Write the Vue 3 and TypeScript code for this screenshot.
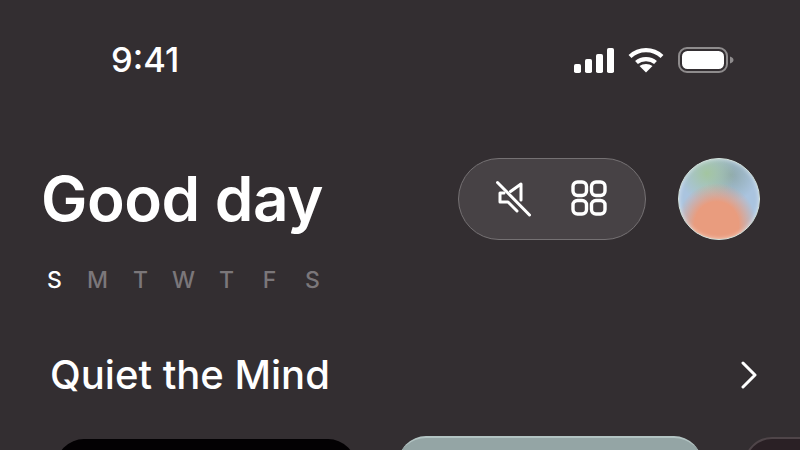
<script setup lang="ts">
const days: string[] = ['S', 'M', 'T', 'W', 'T', 'F', 'S']
</script>

<template>
  <div class="screen">
    <header class="status">
      <span class="time">9:41</span>
      <div class="status-icons">
        <svg width="40" height="25" viewBox="0 0 40 25" fill="#fff">
          <rect x="0" y="16" width="7" height="9" rx="1.8" />
          <rect x="11" y="11" width="7" height="14" rx="1.8" />
          <rect x="22" y="6" width="7" height="19" rx="1.8" />
          <rect x="33" y="0" width="7" height="25" rx="1.8" />
        </svg>
        <svg width="36" height="26" viewBox="0 0 36 26" fill="none" stroke="#fff" stroke-width="4.2">
          <path d="M2 9.5C11 1 25 1 34 9.5" />
          <path d="M8.5 15.5C13.5 11 22.5 11 27.5 15.5" />
          <path d="M11.5 19 L18 25.5 L24.5 19 C21 16.3 15 16.3 11.5 19Z" fill="#fff" stroke="none" />
        </svg>
        <svg class="battery" width="56" height="26" viewBox="0 0 56 26" fill="none">
          <rect x="1" y="1" width="48" height="24" rx="8" stroke="#8f8c8d" stroke-width="2" />
          <rect x="4" y="4" width="42" height="18" rx="5.5" fill="#fff" />
          <path d="M52 9.5 C54.5 10.5 55.5 11.5 55.5 13 C55.5 14.5 54.5 15.5 52 16.5Z" fill="#8f8c8d" />
        </svg>
      </div>
    </header>

    <section class="hero">
      <div class="greeting">
        <h1>Good day</h1>
        <ul class="days">
          <li v-for="(d, i) in days" :key="i" :class="{ active: i === 0 }">{{ d }}</li>
        </ul>
      </div>
      <div class="actions">
        <div class="pill">
          <svg width="36" height="38" viewBox="0 0 36 38" fill="none" stroke="#fff" stroke-width="3" stroke-linejoin="round" stroke-linecap="round">
            <path d="M26 20V4L15.5 11.5M9 13H5V22H13L22 31" />
            <path d="M2.5 2.5L34.5 35" />
          </svg>
          <svg class="grid-icon" width="36" height="36" viewBox="0 0 36 36" fill="none" stroke="#fff" stroke-width="3.4">
            <rect x="2" y="2" width="13.5" height="13.5" rx="4.5" />
            <rect x="20.5" y="2" width="13.5" height="13.5" rx="4.5" />
            <rect x="2" y="20.5" width="13.5" height="13.5" rx="4.5" />
            <rect x="20.5" y="20.5" width="13.5" height="13.5" rx="4.5" />
          </svg>
        </div>
        <div class="avatar"></div>
      </div>
    </section>

    <section class="title-row">
      <h2>Quiet the Mind</h2>
      <svg width="18" height="28" viewBox="0 0 18 28" fill="none" stroke="#fff" stroke-width="3" stroke-linecap="round" stroke-linejoin="round">
        <path d="M3 2L15 14L3 26" />
      </svg>
    </section>

    <section class="cards">
      <div class="card black"></div>
      <div class="card sage"></div>
      <div class="card plum"></div>
    </section>
  </div>
</template>

<style>
html, body { margin: 0; background: #332e31; }
</style>

<style scoped>
.screen {
  width: 800px;
  height: 450px;
  overflow: hidden;
  background: #332e31;
  color: #fff;
  font-family: Inter, "Liberation Sans", sans-serif;
  display: flex;
  flex-direction: column;
}
.status {
  display: flex;
  justify-content: space-between;
  align-items: center;
  padding: 40px 66px 0 111px;
  height: 40px;
}
.time {
  font-size: 34.5px;
  font-weight: 500;
  line-height: 40px;
}
.status-icons {
  display: flex;
  align-items: center;
  gap: 14px;
}
.status-icons svg { display: block; }
.hero {
  display: flex;
  justify-content: space-between;
  align-items: flex-start;
  padding: 78px 40px 0 41px;
}
h1 {
  margin: 1px 0 0;
  font-size: 62px;
  font-weight: 600;
  line-height: 80px;
  letter-spacing: -0.5px;
}
.days {
  list-style: none;
  margin: 27px 0 0 -8px;
  padding: 0;
  display: flex;
}
.days li {
  width: 43px;
  text-align: center;
  font-size: 23px;
  font-weight: 500;
  line-height: 28px;
  color: #7b777a;
}
.days li.active { color: #fff; }
.actions {
  display: flex;
  gap: 32px;
  align-items: center;
}
.pill {
  box-sizing: border-box;
  width: 188px;
  height: 82px;
  border-radius: 41px;
  background: #474245;
  border: 1.5px solid #757173;
  display: flex;
  align-items: center;
  justify-content: center;
  gap: 40px;
}
.grid-icon { margin-right: 3px; margin-top: -2px; }
.avatar {
  width: 82px;
  height: 82px;
  border-radius: 50%;
  box-sizing: border-box;
  border: 1px solid #d5e3dc;
  box-shadow: inset 0 0 4px rgba(255, 255, 255, 0.55);
  background:
    radial-gradient(ellipse 50% 52% at 47% 82%, #e99c7e 0, #e99c7e 55%, rgba(233, 156, 126, 0) 100%),
    radial-gradient(circle at 35% 18%, #a3c5a0 0, rgba(163, 197, 160, 0) 34%),
    radial-gradient(circle at 65% 20%, #8fa9ad 0, rgba(143, 169, 173, 0) 32%),
    #aac4df;
}
.title-row {
  display: flex;
  justify-content: space-between;
  align-items: center;
  padding: 0 42px 0 50px;
  margin-top: 56px;
  height: 50px;
}
h2 {
  margin: 0;
  font-size: 40px;
  font-weight: 500;
  line-height: 50px;
}
.cards {
  display: flex;
  gap: 42px;
  padding-left: 56px;
  margin-top: 38px;
}
.card {
  flex: none;
  height: 60px;
  border-radius: 28px 28px 0 0;
}
.black { width: 300px; background: #030103; margin-top: 1px; }
.sage {
  width: 304px;
  background: #94a5a5;
  border-top: 2px solid #b3c4c3;
  margin-top: -2px;
}
.plum {
  width: 120px;
  background: #2a2025;
  border: 2px solid #4f4549;
  margin-top: -1px;
}
</style>
